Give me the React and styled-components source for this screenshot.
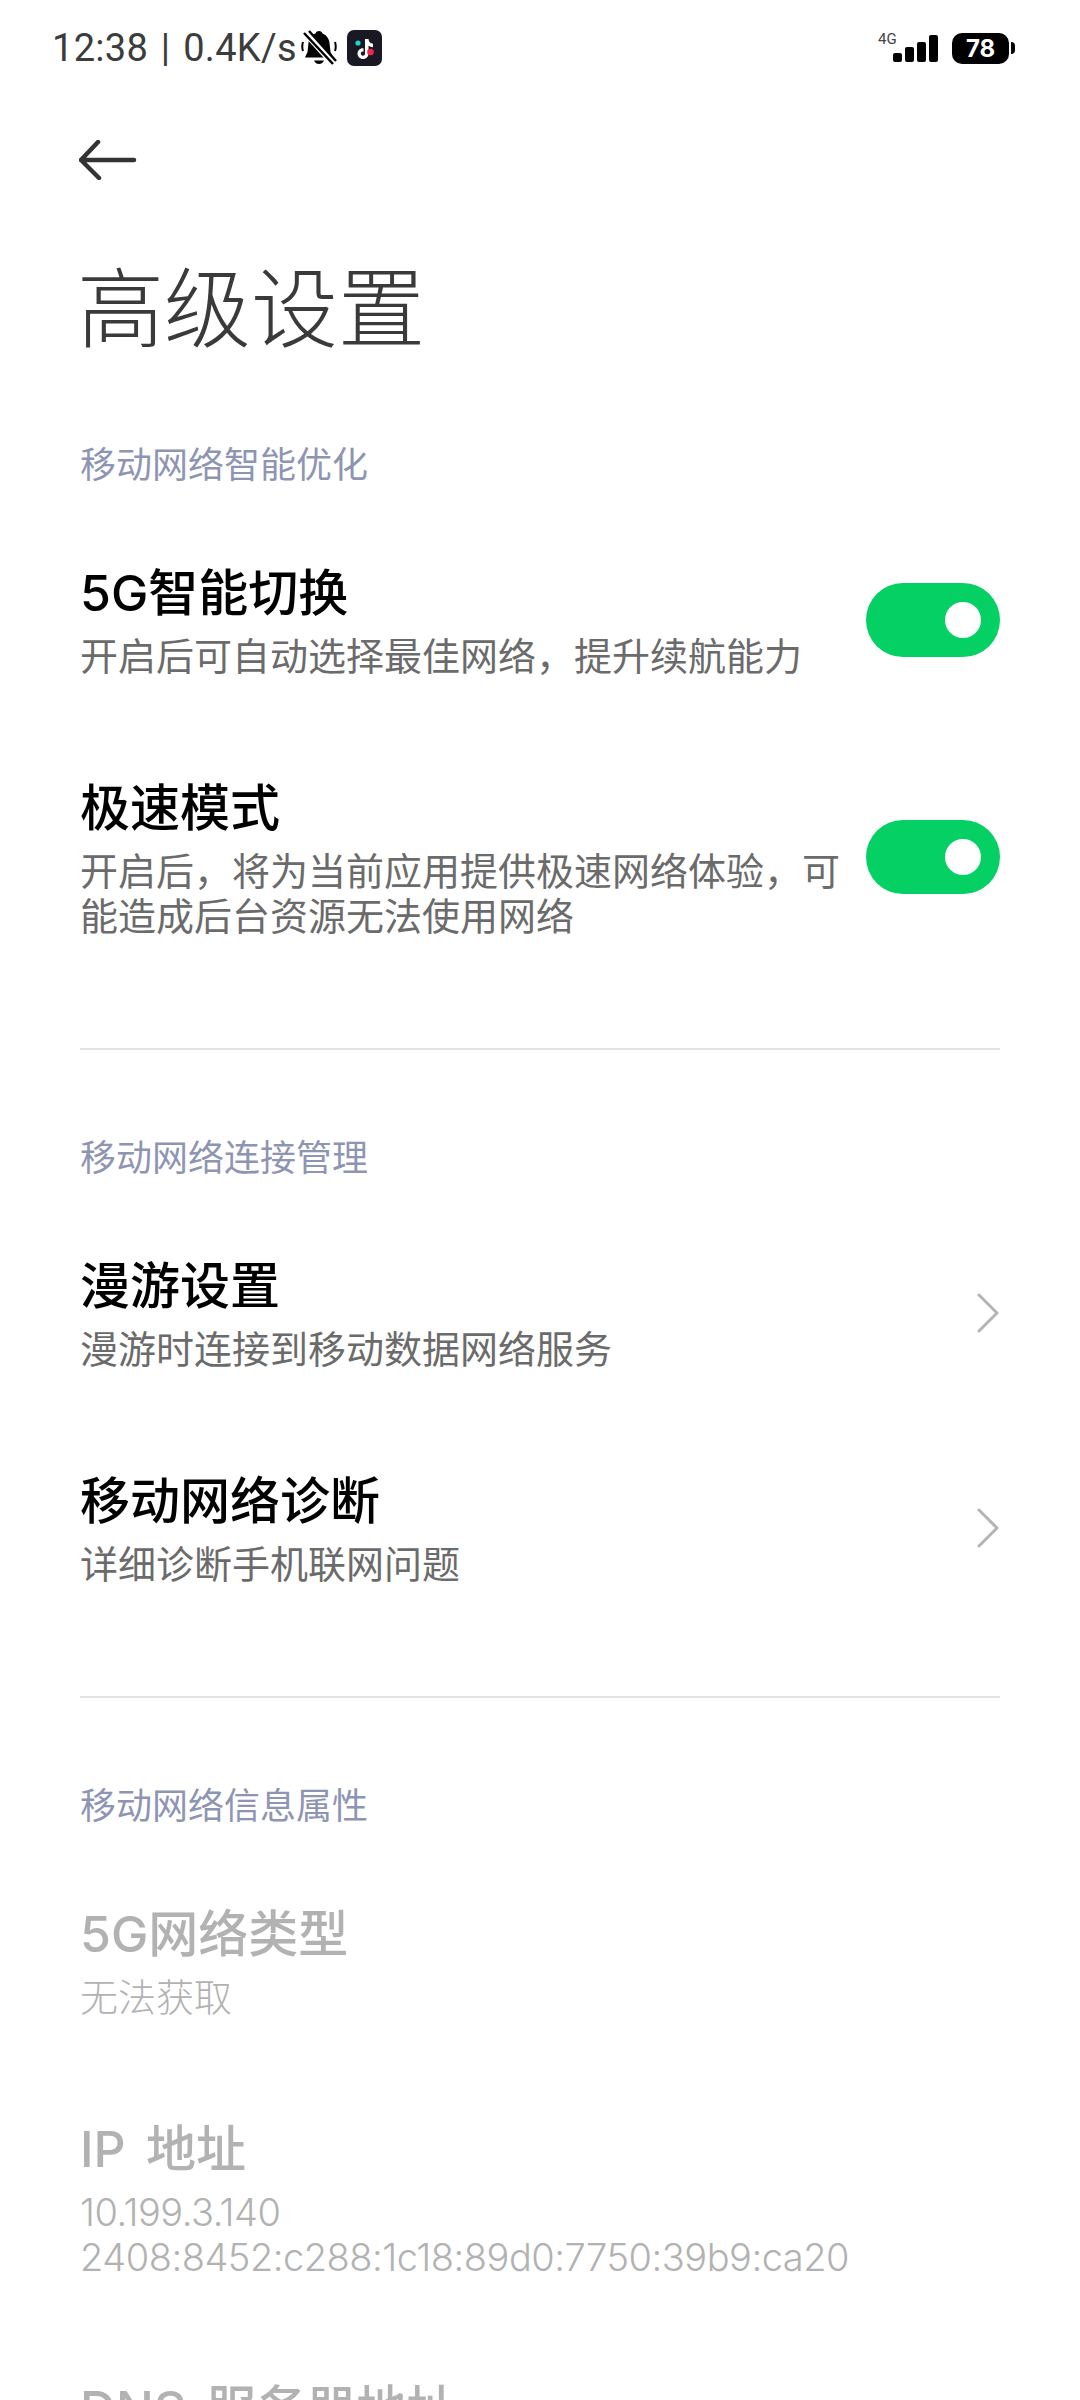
import React from 'react'
import styled, { createGlobalStyle } from 'styled-components'

const GlobalStyle = createGlobalStyle`
  html, body {
    margin: 0;
    padding: 0;
    background: #fff;
  }
  body {
    font-family: "Inter", "Noto Sans CJK SC", sans-serif;
  }
`

const Page = styled.div`
  width: 1080px;
  height: 2400px;
  overflow: hidden;
  background: #fff;
`
const StatusBar = styled.div`
  height: 96px;
  padding: 0 65px 0 52px;
  display: flex;
  align-items: center;
  justify-content: space-between;
`
const StatusLeft = styled.div`
  display: flex;
  align-items: center;
`
const Clock = styled.span`
  font-family: "Roboto", sans-serif;
  font-size: 38px;
  word-spacing: 3px;
  letter-spacing: 0.3px;
  color: #3c3c3c;
  white-space: pre;
`
const StatusRight = styled.div`
  display: flex;
  align-items: center;
  position: relative;
`
const NetLabel = styled.span`
  position: absolute;
  left: -15px;
  top: -3px;
  font-family: "Roboto", sans-serif;
  font-size: 15px;
  color: #444;
`
const Battery = styled.div`
  width: 57px;
  height: 31px;
  margin-left: 14px;
  border-radius: 10px;
  background: #000;
  color: #fff;
  font-family: "Inter", sans-serif;
  font-size: 24px;
  font-weight: 700;
  line-height: 31px;
  text-align: center;
`
const BatteryNub = styled.div`
  width: 4px;
  height: 12px;
  margin-left: 2px;
  border-radius: 0 6px 6px 0;
  background: #000;
`
const BackRow = styled.div`
  height: 64px;
  margin-top: 32px;
  padding-left: 79px;
  display: flex;
  align-items: center;
`
const PageTitle = styled.h1`
  margin: 58px 0 70px 77px;
  font-size: 87px;
  line-height: 120px;
  font-weight: 200;
  color: #3a3a3a;
`
const Section = styled.section`
  padding: 0 80px 61px 80px;
`
const SectionHead = styled.div`
  font-size: 36px;
  line-height: 50px;
  margin-bottom: 22px;
  color: #8e95b3;
`
const Row = styled.div`
  display: flex;
  align-items: center;
  justify-content: space-between;
  padding: 48px 0;
`
const RowText = styled.div`
  width: 770px;
`
const RowTitle = styled.div`
  font-size: 50px;
  line-height: 66px;
  margin-bottom: 8px;
  font-weight: 500;
  word-spacing: 7px;
  color: ${p => (p.$off ? '#b2b2b2' : '#000')};
  white-space: nowrap;
`
const RowSub = styled.div`
  font-size: 38px;
  line-height: 45px;
  font-weight: ${p => (p.$off ? 300 : 400)};
  letter-spacing: ${p => (p.$latin ? '-0.48px' : '0')};
  color: ${p => (p.$off ? '#b2b2b2' : '#6b6b6b')};
  white-space: nowrap;
`
const Toggle = styled.div`
  width: 134px;
  height: 74px;
  border-radius: 37px;
  background: #05d063;
  display: flex;
  align-items: center;
  justify-content: flex-end;
  padding-right: 19px;
  box-sizing: border-box;
`
const Knob = styled.div`
  width: 36px;
  height: 36px;
  border-radius: 50%;
  background: #fff;
`
const Divider = styled.div`
  height: 2px;
  margin: 0 80px 83px 80px;
  background: #e2e2e2;
`

const BackIcon = () => (
  <svg width="58" height="40" viewBox="0 0 58 40" fill="none" stroke="#333" strokeWidth="4.500" strokeLinecap="round" strokeLinejoin="round">
    <path d="M55 20H2M19 2L2 20l18 18" />
  </svg>
)

const BellOff = () => (
  <svg width="36" height="36" viewBox="0 0 36 36" style={{ marginLeft: 4 }}>
    <path d="M18 1c2 0 3 1 3.500 2.500 4 1.500 6.500 5 7 9.500l1 9 3 5.500H4l2.500-5.500L7.500 13c.5-5 3-8.500 7-9.500C15 2 16 1 18 1z" fill="#000" />
    <path d="M13 30.500h10c-1 2.500-3 3.500-5 3.500s-4-1-5-3.500z" fill="#000" />
    <path d="M2 12c-1 3-1 6 0 9M34 12c1 3 1 6 0 9" stroke="#000" strokeWidth="2" fill="none" />
    <path d="M4 2l28 31" stroke="#fff" strokeWidth="7" />
    <path d="M3 3l29 31M8 1l27 30" stroke="#000" strokeWidth="2.500" fill="none" />
  </svg>
)

const TikTok = () => (
  <svg width="35" height="36" viewBox="0 0 35 36" style={{ marginLeft: 10 }}>
    <rect width="35" height="36" rx="7" fill="#1a1822" />
    <path d="M18 9h3.500c.3 3 2 4.500 4.500 4.800v3.400c-1.800 0-3.300-.5-4.500-1.400v7.700c0 3.300-2.500 5.500-5.500 5.500s-5.500-2.400-5.500-5.500 2.800-5.700 6-5.300v3.500c-1.400-.4-2.700.6-2.700 1.900s1 2.200 2.200 2.200 2-1 2-2.300z" fill="#fff" />
    <circle cx="11" cy="13" r="2.600" fill="#1fd6cf" />
    <circle cx="23.500" cy="22" r="3.300" fill="#f5254f" />
  </svg>
)

const Signal = () => (
  <svg width="45" height="27" viewBox="0 0 45 27" fill="#000">
    <rect x="0" y="18" width="9" height="9" rx="2" />
    <rect x="12" y="12" width="9" height="15" rx="2" />
    <rect x="24" y="7" width="9" height="20" rx="2" />
    <rect x="36" y="0" width="9" height="27" rx="2" />
  </svg>
)

const Chevron = () => (
  <svg width="22" height="40" viewBox="0 0 22 40" fill="none" stroke="#b4b4b4" strokeWidth="3" strokeLinecap="round" strokeLinejoin="round" style={{ marginRight: 1 }}>
    <path d="M2 2l18 18L2 38" />
  </svg>
)

const ToggleOn = () => (
  <Toggle>
    <Knob />
  </Toggle>
)

const Item = ({ title, sub, off, latin, children }) => (
  <Row>
    <RowText>
      <RowTitle $off={off}>{title}</RowTitle>
      {sub.map(line => (
        <RowSub key={line} $off={off} $latin={latin}>{line}</RowSub>
      ))}
    </RowText>
    {children}
  </Row>
)

export default function App() {
  return (
    <Page>
      <GlobalStyle />
      <StatusBar>
        <StatusLeft>
          <Clock>12:38 | 0.4K/s</Clock>
          <BellOff />
          <TikTok />
        </StatusLeft>
        <StatusRight>
          <NetLabel>4G</NetLabel>
          <Signal />
          <Battery>78</Battery>
          <BatteryNub />
        </StatusRight>
      </StatusBar>
      <BackRow>
        <BackIcon />
      </BackRow>
      <PageTitle>高级设置</PageTitle>

      <Section>
        <SectionHead>移动网络智能优化</SectionHead>
        <Item title="5G智能切换" sub={['开启后可自动选择最佳网络，提升续航能力']}>
          <ToggleOn />
        </Item>
        <Item title="极速模式" sub={['开启后，将为当前应用提供极速网络体验，可', '能造成后台资源无法使用网络']}>
          <ToggleOn />
        </Item>
      </Section>
      <Divider />

      <Section>
        <SectionHead>移动网络连接管理</SectionHead>
        <Item title="漫游设置" sub={['漫游时连接到移动数据网络服务']}>
          <Chevron />
        </Item>
        <Item title="移动网络诊断" sub={['详细诊断手机联网问题']}>
          <Chevron />
        </Item>
      </Section>
      <Divider />

      <Section>
        <SectionHead>移动网络信息属性</SectionHead>
        <Item off title="5G网络类型" sub={['无法获取']} />
        <Item off latin title="IP 地址" sub={['10.199.3.140', '2408:8452:c288:1c18:89d0:7750:39b9:ca20']} />
        <Item off title="DNS 服务器地址" sub={[]} />
      </Section>
    </Page>
  )
}
